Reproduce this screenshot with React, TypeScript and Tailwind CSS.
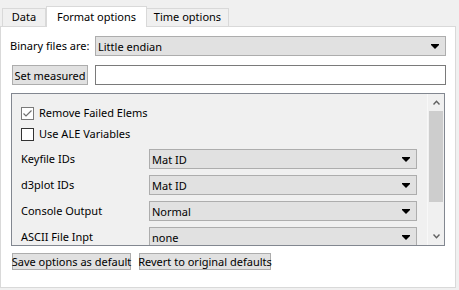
import React from "react";

const Arrow = () => (
  <svg width="8" height="5" viewBox="0 0 8 5" className="shrink-0">
    <path d="M0 0H8V1L4 5L0 1Z" fill="#000" />
  </svg>
);

const Combo = ({ text, className = "" }: { text: string; className?: string }) => (
  <div
    className={`flex h-[20px] items-center justify-between border border-[#adadad] bg-[#e1e1e1] pl-[2px] pr-[6px] ${className}`}
  >
    <span className="whitespace-nowrap leading-none">{text}</span>
    <Arrow />
  </div>
);

const Btn = ({ text, className = "" }: { text: string; className?: string }) => (
  <div
    className={`flex items-center justify-center border border-[#adadad] bg-[#e1e1e1] ${className}`}
  >
    <span className="whitespace-nowrap leading-none">{text}</span>
  </div>
);

const Check = ({ checked }: { checked?: boolean }) => (
  <div
    className={`flex h-[13px] w-[13px] shrink-0 items-center justify-center border bg-white ${
      checked ? "border-[#7a7a7a]" : "border-[#333333]"
    }`}
  >
    {checked && (
      <svg width="11" height="11" viewBox="0 0 11 11">
        <path d="M1.5 5.5L4 8L9.5 2.5" stroke="#707070" strokeWidth="1.2" fill="none" />
      </svg>
    )}
  </div>
);

const Row = ({ label, value }: { label: string; value: string }) => (
  <div className="flex h-[20px] items-center">
    <span className="w-[137px] shrink-0 whitespace-nowrap pl-[9px]">{label}</span>
    <Combo text={value} className="w-[268px]" />
  </div>
);

export default function App() {
  return (
    <div
      className="h-[290px] w-[459px] overflow-hidden bg-[#f0f0f0] text-[11px] text-black"
      style={{ fontFamily: '"Noto Sans", "Open Sans", sans-serif' }}
    >
      {/* tabs */}
      <div className="flex h-[26px] items-end pl-[2px]">
        <div className="flex h-[18px] w-[44px] items-center justify-center whitespace-nowrap border border-b-0 border-[#d9d9d9] bg-[#f0f0f0]">
          Data
        </div>
        <div className="relative z-10 -mb-[1px] flex h-[21px] w-[101px] items-start justify-center whitespace-nowrap border border-b-0 border-[#d9d9d9] bg-white pt-[2px]">
          Format options
        </div>
        <div className="flex h-[18px] w-[82px] items-center justify-center whitespace-nowrap border border-b-0 border-l-0 border-[#d9d9d9] bg-[#f0f0f0]">
          Time options
        </div>
      </div>
      {/* pane */}
      <div className="h-[262px] w-[456px] border border-[#d9d9d9] bg-white pt-[9px]">
        <div className="flex h-[20px] items-center">
          <span className="w-[94px] shrink-0 whitespace-nowrap pl-[9px]">Binary files are:</span>
          <Combo text="Little endian" className="w-[351px]" />
        </div>
        <div className="mt-[9px] flex h-[20px] items-center">
          <div className="w-[94px] shrink-0 pl-[11px]">
            <Btn text="Set measured" className="h-[20px] w-[76px]" />
          </div>
          <div className="h-[20px] w-[351px] border border-[#7a7a7a] bg-white" />
        </div>
        {/* scroll area */}
        <div className="ml-[10px] mt-[8px] flex h-[153px] w-[434px] border border-[#828790] bg-[#f0f0f0]">
          <div className="flex flex-1 flex-col overflow-hidden pt-[13px]">
            <div className="flex h-[13px] items-center pl-[9px]">
              <Check checked />
              <span className="ml-[5px] whitespace-nowrap">Remove Failed Elems</span>
            </div>
            <div className="mt-[8px] flex h-[13px] items-center pl-[9px]">
              <Check />
              <span className="ml-[5px] whitespace-nowrap">Use ALE Variables</span>
            </div>
            <div className="mt-[8px] flex flex-col gap-[6px]">
              <Row label="Keyfile IDs" value="Mat ID" />
              <Row label="d3plot IDs" value="Mat ID" />
              <Row label="Console Output" value="Normal" />
              <Row label="ASCII File Inpt" value="none" />
            </div>
          </div>
          {/* scrollbar */}
          <div className="flex w-[17px] shrink-0 flex-col border-l border-[#f8f8f8] bg-[#f0f0f0]">
            <div className="flex h-[17px] items-center justify-center">
              <svg width="7" height="5" viewBox="0 0 7 5">
                <path d="M0.5 4.5L3.5 1.2L6.5 4.5" stroke="#606060" strokeWidth="1.4" fill="none" />
              </svg>
            </div>
            <div className="mx-[1px] h-[91px] bg-[#cdcdcd]" />
            <div className="flex-1" />
            <div className="flex h-[17px] items-center justify-center">
              <svg width="7" height="5" viewBox="0 0 7 5">
                <path d="M0.5 0.5L3.5 3.8L6.5 0.5" stroke="#606060" strokeWidth="1.4" fill="none" />
              </svg>
            </div>
          </div>
        </div>
        <div className="ml-[11px] mt-[7px] flex gap-[8px]">
          <Btn text="Save options as default" className="h-[17px] w-[119px]" />
          <Btn text="Revert to original defaults" className="h-[17px] w-[132px]" />
        </div>
      </div>
    </div>
  );
}
